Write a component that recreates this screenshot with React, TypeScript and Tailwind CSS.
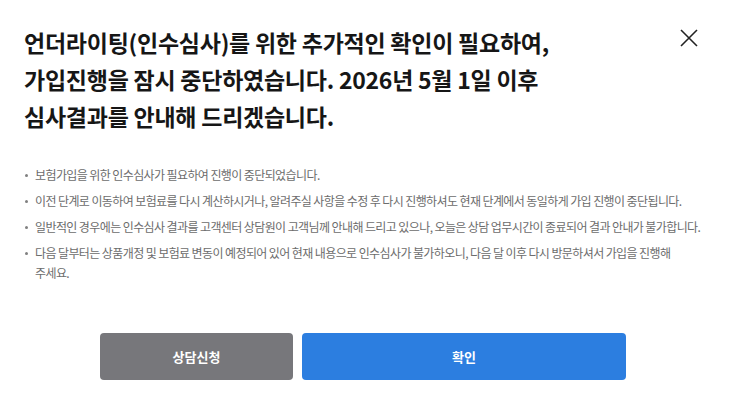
import React from "react";

const bullets = [
  "보험가입을 위한 인수심사가 필요하여 진행이 중단되었습니다.",
  "이전 단계로 이동하여 보험료를 다시 계산하시거나, 알려주실 사항을 수정 후 다시 진행하셔도 현재 단계에서 동일하게 가입 진행이 중단됩니다.",
  "일반적인 경우에는 인수심사 결과를 고객센터 상담원이 고객님께 안내해 드리고 있으나, 오늘은 상담 업무시간이 종료되어 결과 안내가 불가합니다.",
  "다음 달부터는 상품개정 및 보험료 변동이 예정되어 있어 현재 내용으로 인수심사가 불가하오니, 다음 달 이후 다시 방문하셔서 가입을 진행해 주세요.",
];

export default function App() {
  return (
    <div
      className="w-[730px] h-[403px] bg-white flex flex-col px-6 pt-6 overflow-hidden break-keep"
      style={{ fontFamily: '"Noto Sans CJK KR", "Noto Sans", sans-serif' }}
    >
      <div className="flex justify-between">
        <h1 className="text-[23px] leading-[37px] font-bold text-[#161616] tracking-[-0.25px]">
          언더라이팅(인수심사)를 위한 추가적인 확인이 필요하여,
          <br />
          가입진행을 잠시 중단하였습니다. 2026년 5월 1일 이후
          <br />
          심사결과를 안내해 드리겠습니다.
        </h1>
        <button className="w-[20px] h-[20px] mt-[4px] mr-[7px] flex items-center justify-center">
          <svg width="20" height="20" viewBox="0 0 20 20">
            <path d="M2 2 L18 18 M18 2 L2 18" stroke="#222" strokeWidth="1.6" fill="none" />
          </svg>
        </button>
      </div>
      <ul className="mt-[30px] mr-[3px] flex flex-col gap-[6px]">
        {bullets.map((b, i) => (
          <li key={i} className="flex text-[12px] leading-[20px] text-[#6c6c6c] tracking-[-0.6px] break-keep">
            <span className="w-[11px] shrink-0 flex pt-[9px]">
              <span className="w-[3px] h-[3px] rounded-full bg-[#808080] ml-[1px]" />
            </span>
            <span className="break-keep">{b}</span>
          </li>
        ))}
      </ul>
      <div className="mt-auto mb-[23px] flex gap-[9px] pl-[76px]">
        <button className="w-[193px] h-[47px] rounded-[4px] bg-[#77777b] text-white text-[13px] font-bold">
          상담신청
        </button>
        <button className="w-[324px] h-[47px] rounded-[4px] bg-[#2c7ee0] text-white text-[13px] font-bold">
          확인
        </button>
      </div>
    </div>
  );
}
